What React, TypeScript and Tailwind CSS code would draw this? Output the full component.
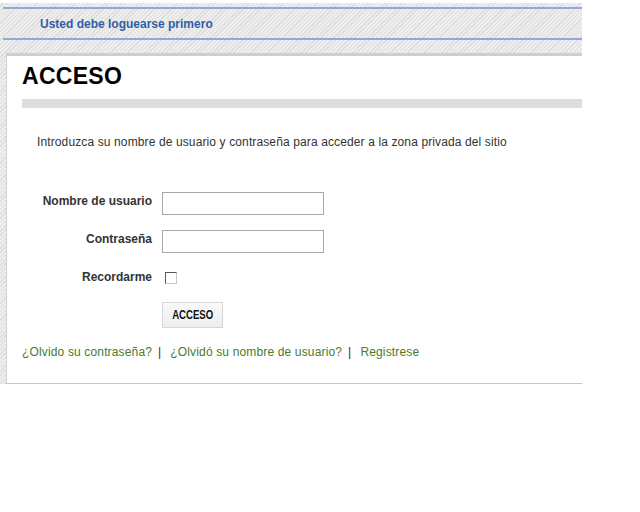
import React from "react";

const hatch =
  "bg-[repeating-linear-gradient(135deg,#eeeeee_0px,#eeeeee_2px,#dcdcdc_2px,#dcdcdc_3px)]";

export default function App() {
  return (
    <div className="w-[640px] h-[512px] bg-white font-['Liberation_Sans',Arial,sans-serif] text-[#333]">
      <div className="h-[3px]" />
      <div className={`w-[582px] h-[381px] flex flex-col ${hatch}`}>
        <div className="h-[4px]" />
        <div className="ml-[3px] h-[2px] bg-[#8aacd6]" />
        <div className="h-[29px] pl-[40px] pt-[8px] text-[12px] leading-[14px] font-bold text-[#2e5fa6]">
          Usted debe loguearse primero
        </div>
        <div className="ml-[3px] h-[2px] bg-[#8aacd6]" />
        <div className="h-[13px]" />
        <div className="ml-[6px] flex-1 bg-white border-t-[3px] border-t-[#cecece] border-l border-l-[#cfcfcf] border-b border-b-[#c4c4c4] pl-[15px] flex flex-col">
          <h1 className="mt-[9px] text-[23px] leading-[23px] font-bold text-black tracking-[0.3px]">
            ACCESO
          </h1>
          <div className="mt-[11px] h-[9px] bg-[#dddddd]" />
          <p className="mt-[27px] ml-[15px] text-[12px] leading-[14px] text-[#333] tracking-[0.12px]">
            Introduzca su nombre de usuario y contraseña para acceder a la zona privada del sitio
          </p>

          <div className="mt-[43px] flex items-start">
            <label className="w-[130px] pt-[2px] text-right text-[12px] leading-[14px] font-bold text-[#333]">
              Nombre de usuario
            </label>
            <input
              type="text"
              className="ml-[10px] w-[162px] h-[23px] border border-[#a9a9a9] bg-white outline-none"
            />
          </div>
          <div className="mt-[15px] flex items-start">
            <label className="w-[130px] pt-[2px] text-right text-[12px] leading-[14px] font-bold text-[#333]">
              Contraseña
            </label>
            <input
              type="password"
              className="ml-[10px] w-[162px] h-[23px] border border-[#a9a9a9] bg-white outline-none"
            />
          </div>
          <div className="mt-[17px] flex items-start">
            <label className="w-[130px] text-right text-[12px] leading-[14px] font-bold text-[#333]">
              Recordarme
            </label>
            <div className="ml-[13px] mt-[2px] w-[12px] h-[12px] border border-[#555] border-r-[#c8c8c8] border-b-[#c8c8c8] bg-white" />
          </div>
          <div className="mt-[18px] pl-[140px]">
            <button className="w-[61px] h-[26px] border border-[#d6d6d6] bg-[linear-gradient(#f9f9f9,#ededed)] text-[12px] font-bold text-[#111] flex items-center justify-center">
              <span className="inline-block scale-x-[0.8]">ACCESO</span>
            </button>
          </div>
          <div className="mt-[17px] text-[12px] leading-[14px] text-[#333] flex tracking-[0.15px]">
            <a className="text-[#4a7a2e]">¿Olvido su contraseña?</a>
            <span className="ml-[6px]">|</span>
            <a className="ml-[9px] text-[#4a7a2e]">¿Olvidó su nombre de usuario?</a>
            <span className="ml-[6px]">|</span>
            <a className="ml-[9px] text-[#4a7a2e]">Registrese</a>
          </div>
        </div>
      </div>
    </div>
  );
}
